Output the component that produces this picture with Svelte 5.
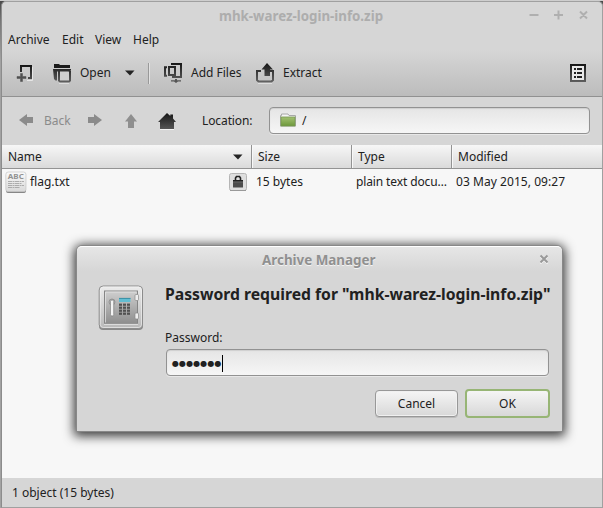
<script>
  const menus = [
    { label: 'Archive', w: 54 },
    { label: 'Edit', w: 33 },
    { label: 'View', w: 38 },
    { label: 'Help', w: 40 }
  ];
  const headers = ['Name', 'Size', 'Type', 'Modified'];
  const keys = [0, 1, 2, 3].flatMap((r) => [0, 1, 2].map((c) => ({ x: 21 + c * 4, y: 18.6 + r * 3 })));
</script>

<div class="screen">
  <div class="window">
    <div class="titlebar">
      <span class="title">mhk-warez-login-info.zip</span>
      <svg class="controls" width="62" height="12" viewBox="0 0 62 12">
        <path d="M0.5 6H9.5M25 6H34M29.5 1.5V10.5M51 2.5L58 9.5M58 2.5L51 9.5" stroke="#afafaf" stroke-width="2" />
      </svg>
    </div>

    <div class="menubar">
      {#each menus as m}
        <span style="width:{m.w}px">{m.label}</span>
      {/each}
    </div>

    <div class="toolbar">
      <svg class="i-new" width="18" height="20" viewBox="0 0 18 20">
        <defs>
          <linearGradient id="dark" x1="0" y1="0" x2="0" y2="20" gradientUnits="userSpaceOnUse">
            <stop offset="0" stop-color="#151515" /><stop offset="1" stop-color="#666" />
          </linearGradient>
        </defs>
        <path d="M10 15.5H15.5V2" fill="none" stroke="#e6e6e6" stroke-width="1" />
        <path d="M4 7V1H14V13H11" fill="none" stroke="url(#dark)" stroke-width="2" />
        <path d="M0 11.5H3.5V8.5H5.5V11.5H9V13.5H5.5V16.5H3.5V13.5H0Z" fill="#505050" stroke="#505050" stroke-width=".5" />
      </svg>
      <svg class="i-open" width="20" height="21" viewBox="0 0 20 21">
        <path d="M1 0H6L7 1H17V4H1Z" fill="#1b1b1b" />
        <path d="M0 5H18V6.5H5.5L4 8V16.5H2.5L1 15Z" fill="url(#dark)" />
        <path d="M6 19.2H16" stroke="#e8e8e8" stroke-width="1" />
        <path d="M6 6.5H16L17 7.5V16.5L16 17.5H7L6 16.5Z" fill="#d0d0d0" stroke="url(#dark)" stroke-width="2" />
      </svg>
      <span class="open">Open</span>
      <svg class="i-arrow" width="10" height="6" viewBox="0 0 10 6"><path d="M0 0.5H9.5L5 5.5Z" fill="#242424" /></svg>
      <i class="divider"></i>
      <svg class="i-add" width="20" height="22" viewBox="0 0 20 22">
        <path d="M7 1H17V14H8M3 4.2H1V12.8H3" fill="none" stroke="url(#dark)" stroke-width="2" />
        <rect x="5" y="4" width="6" height="8" fill="none" stroke="url(#dark)" stroke-width="2" />
        <path d="M11 16H13V17.2H17V18.5H14L12 20L10 18.5H7V17.2H11Z" fill="#555" />
      </svg>
      <span class="add">Add Files</span>
      <svg class="i-ext" width="20" height="21" viewBox="0 0 20 21">
        <path d="M2 20.2H16" stroke="#e9e9e9" stroke-width="1" />
        <path d="M5 8H1V17L2.5 18.5H15.5L17 17V8H13" fill="none" stroke="url(#dark)" stroke-width="2" />
        <path d="M11 0L17 6.5H14V13H8.5V6.5H5.5Z" fill="url(#dark)" />
      </svg>
      <span class="extract">Extract</span>
      <svg class="i-list" width="17" height="19" viewBox="0 0 17 19">
        <rect x="1" y="1" width="14" height="16" fill="#e8e8e8" stroke="url(#dark)" stroke-width="2" />
        <path d="M4 5H6M4 9H6M4 13H6M7 5H12M7 9H12M7 13H12" stroke="#222" stroke-width="2" />
      </svg>
    </div>

    <div class="location">
      <svg class="n-back" width="15" height="13" viewBox="0 0 15 13"><path d="M0 6L8 0V3H14V9H8V12Z" fill="#8b8b8b" /></svg>
      <span class="back">Back</span>
      <svg class="n-fwd" width="15" height="13" viewBox="0 0 15 13"><path d="M14 6L6 0V3H0V9H6V12Z" fill="#8b8b8b" /></svg>
      <svg class="n-up" width="13" height="15" viewBox="0 0 13 15"><path d="M6 0L12 7.5H9V14H3V7.5H0Z" fill="#8f8f8f" /></svg>
      <svg class="n-home" width="19" height="18" viewBox="0 0 19 18">
        <path d="M2 16.5H16" stroke="#f4f4f4" stroke-width="1" />
        <path d="M9 0L12.3 3V1.5H15V5.5L18 9H16V16H2V9H0Z" fill="url(#dark)" />
      </svg>
      <span class="loc">Location:</span>
      <div class="entry path">
        <svg width="17" height="15" viewBox="0 0 17 15">
          <defs>
            <linearGradient id="green" x1="0" y1="0" x2="0" y2="1">
              <stop offset="0" stop-color="#a3c172" /><stop offset="1" stop-color="#6d983b" />
            </linearGradient>
          </defs>
          <path d="M.5 13V2.5H1.5V1H8L9 2.5H15.5V13Z" fill="#f4f4f4" stroke="#a8a8a8" />
          <rect x="1" y="4" width="14" height="9" fill="url(#green)" stroke="#779850" stroke-width=".8" />
        </svg>
        <span>/</span>
      </div>
    </div>

    <div class="headers">
      {#each headers as h, i}
        <div class="th">
          <span>{h}</span>
          {#if i === 0}
            <svg width="10" height="6" viewBox="0 0 10 6"><path d="M0 0.5H9.5L5 5.5Z" fill="#242424" /></svg>
          {/if}
        </div>
      {/each}
    </div>

    <div class="list">
      <div class="row">
        <div class="name">
          <svg width="23" height="24" viewBox="0 0 23 24">
            <defs>
              <linearGradient id="paper" x1="0" y1="0" x2="0" y2="1">
                <stop offset="0" stop-color="#fafafa" /><stop offset="1" stop-color="#d8d8d8" />
              </linearGradient>
            </defs>
            <rect x="1" y="2" width="20" height="20" rx="2.5" fill="#777" />
            <rect x=".8" y="1" width="20.2" height="19.8" rx="2.5" fill="url(#paper)" stroke="#c4c4c4" stroke-width=".7" />
            <text x="2.8" y="8" class="abc" textLength="16" lengthAdjust="spacingAndGlyphs">ABC</text>
            <path d="M3 10.5H19M3 12.5H17M3 14.5H19M3 16.5H15" stroke="#a5a5a5" stroke-width=".9" stroke-dasharray="4 .5 2 .5" />
          </svg>
          <span>flag.txt</span>
          <svg class="lock" width="19" height="19" viewBox="0 0 19 19">
            <rect x=".5" y=".5" width="17" height="17" rx="2" fill="#dedede" stroke="#b5b5b5" />
            <path d="M1 17.5H17" stroke="#999" />
            <path d="M6.5 8V5L7.5 3.5H10.5L11.5 5V8" fill="none" stroke="#222" stroke-width="1.6" />
            <rect x="4" y="7" width="10" height="7.5" rx=".5" fill="#4c4c4c" />
            <path d="M4 7.5H14" stroke="#222" />
            <path d="M4 9.5H14" stroke="#666" stroke-width=".5" />
          </svg>
        </div>
        <div>15 bytes</div>
        <div class="kind">plain text docu…</div>
        <div class="date">03 May 2015, 09:27</div>
      </div>
    </div>

    <div class="status">1 object (15 bytes)</div>
  </div>

  <div class="dialog">
    <div class="dtitle">
      <span>Archive Manager</span>
      <svg width="10" height="10" viewBox="0 0 10 10">
        <path d="M1.5 2.5L8.5 9.5M8.5 2.5L1.5 9.5" stroke="#fff" stroke-width="1.6" />
        <path d="M1.5 1.5L8.5 8.5M8.5 1.5L1.5 8.5" stroke="#999" stroke-width="2" />
      </svg>
    </div>
    <div class="dbody">
      <svg class="safe" width="46" height="46" viewBox="0 0 46 46">
        <defs>
          <linearGradient id="metal" x1="0" y1="0" x2="0" y2="1">
            <stop offset="0" stop-color="#ececec" /><stop offset="1" stop-color="#b8b8b8" />
          </linearGradient>
          <linearGradient id="door" x1="0" y1="0" x2="0" y2="1">
            <stop offset="0" stop-color="#cfcfcf" /><stop offset="1" stop-color="#8e8e8e" />
          </linearGradient>
        </defs>
        <rect x="1" y="2" width="44" height="43" rx="4" fill="#6f6f6f" opacity=".75" />
        <rect x="1.2" y="1" width="43.3" height="42.6" rx="4" fill="url(#metal)" stroke="#8c8c8c" />
        <rect x="2.3" y="2" width="41.2" height="40.5" rx="3" fill="none" stroke="#f5f5f5" stroke-width=".6" />
        <rect x="6.5" y="6" width="33" height="32.5" fill="url(#door)" stroke="#858585" />
        <path d="M7.5 37.5V7H38.5" fill="none" stroke="#e8e8e8" stroke-width=".7" />
        <path d="M6 39.3H40" stroke="#eee" stroke-width=".8" />
        <rect x="37" y="9.5" width="3.5" height="6" rx="1" fill="#eee" stroke="#888" stroke-width=".7" />
        <rect x="37" y="28" width="3.5" height="6" rx="1" fill="#eee" stroke="#888" stroke-width=".7" />
        <circle cx="14" cy="17" r="3" fill="#b4b4b4" stroke="#858585" stroke-width=".7" />
        <rect x="12.5" y="15" width="3.2" height="16" rx="1.5" fill="#f4f4f4" stroke="#777" stroke-width=".6" />
        <rect x="21" y="13" width="11.5" height="4" fill="#62bdd2" />
        <path d="M21 13.4H32.5" stroke="#2f8197" stroke-width=".8" />
        {#each keys as k}
          <rect x={k.x} y={k.y} width="3" height="2.2" fill="#505050" />
        {/each}
      </svg>
      <div class="form">
        <h1>Password required for "mhk-warez-login-info.zip"</h1>
        <label for="pw">Password:</label>
        <div class="entry pw" id="pw"><span>●●●●●●●</span><i></i></div>
        <div class="buttons">
          <button class="cancel">Cancel</button>
          <button class="ok">OK</button>
        </div>
      </div>
    </div>
  </div>
</div>

<style>
  :global(body) { margin: 0; overflow: hidden; }
  * { box-sizing: border-box; }
  .screen {
    position: relative; width: 603px; height: 508px; overflow: hidden;
    background: linear-gradient(#4a4a4a, #777 20px, #a2a2a2 60px);
    font: 12px/16px "Noto Sans", "Open Sans", sans-serif; color: #212121;
    border-top: 1px solid #cecece; white-space: nowrap;
  }
  svg { display: block; flex: none; overflow: visible; }
  .window {
    display: flex; flex-direction: column; width: 602px; height: 507px; margin-left: 1px;
    background: #d6d6d6; border: 1px solid #a0a0a0; border-left-color: #8c8c8c;
    border-radius: 5px 5px 0 0;
  }
  .titlebar { display: flex; height: 27px; align-items: flex-start; padding: 6px 0 0 217px; }
  .title { width: 163px; font-weight: 700; font-size: 13.3px; color: #adadad; line-height: 17px; }
  .controls { margin: 1px 0 0 147px; }
  .menubar { display: flex; height: 21px; padding: 3px 0 0 6px; }
  .toolbar {
    display: flex; align-items: flex-start; height: 47px; padding: 13px 15px 0 15px;
    background: linear-gradient(#d6d6d6, #bcbcbc); border-bottom: 1px solid #919191;
  }
  .toolbar span { margin-top: 2px; }
  .i-new { margin: 2px 18px 0 0; }
  .i-open { margin-right: 7px; margin-top: 1px; }
  .open { width: 45px; }
  .i-arrow { margin-top: 7px; }
  .divider { width: 2px; height: 21px; margin: 0 14px 0 13px; background: #999; border-right: 1px solid #e2e2e2; }
  .i-add { margin-right: 7px; }
  .add { width: 65px; }
  .i-ext { margin-right: 7px; margin-top: 0; }
  .extract { flex: 1; }
  .i-list { margin: 1px 0 0 0; }
  .location { display: flex; height: 48px; align-items: flex-start; padding-left: 17px; }
  .n-back { margin: 17px 10px 0 0; }
  .back { width: 44px; margin-top: 16px; color: #8b8b8b; }
  .n-fwd { margin: 17px 22px 0 0; }
  .n-up { margin: 17px 20px 0 0; }
  .n-home { margin: 16px 25px 0 0; }
  .loc { width: 67px; margin-top: 16px; letter-spacing: -.1px; }
  .entry {
    display: flex; border: 1px solid #929292; border-radius: 4px;
    background: linear-gradient(#e5e5e5, #f6f6f6);
    box-shadow: 0 1px 0 #e8e8e8, inset 0 1px 1px #cfcfcf;
  }
  .path { width: 321px; height: 27px; margin-top: 10px; padding: 5px 0 0 10px; gap: 5px; }
  .headers {
    display: grid; grid-template-columns: 250px 100px 100px 1fr; height: 24px;
    background: linear-gradient(#f7f7f7, #dadada); border-bottom: 1px solid #939393;
  }
  .th { display: flex; justify-content: space-between; padding: 4px 8px 0 6px; border-right: 1px solid #939393; }
  .th + .th { border-left: 1px solid #f8f8f8; padding-left: 5px; }
  .th:last-child { border-right: 0; }
  .th svg { margin-top: 5px; }
  .list { height: 309px; background: #f7f7f7; }
  .row { display: grid; grid-template-columns: 254px 100px 100px 1fr; padding-top: 5px; }
  .name { display: flex; align-items: flex-start; height: 20px; }
  .name > svg:first-child { margin: -3px 2px 0 3px; }
  .name span { width: 199px; }
  .abc { font: 700 6.5px "Noto Sans", sans-serif; fill: #929292; }
  .kind { letter-spacing: -.12px; }
  .date { letter-spacing: .05px; }
  .lock { margin-top: -1px; }
  .status { flex: 1; padding: 7px 0 0 10px; }
  .dialog {
    position: absolute; left: 76px; top: 244px; width: 487px; height: 187px;
    background: #d6d6d6; border: 1px solid #888; border-radius: 6px 6px 0 0;
    box-shadow: 0 2px 11px 2px rgba(0, 0, 0, .78);
  }
  .dtitle {
    display: flex; height: 25px; padding: 5px 0 0 185px; border-radius: 5px 5px 0 0;
    background: linear-gradient(#e6e6e6, #d6d6d6); border-top: 1px solid #fff;
    font-size: 13.4px; font-weight: 700; line-height: 17px; color: #909090; text-shadow: 0 1px #f3f3f3;
  }
  .dtitle span { width: 277px; }
  .dtitle svg { margin-top: 2px; }
  .dbody { display: flex; padding-left: 21px; }
  .safe { margin-top: 14px; }
  .form { margin-left: 21px; width: 386px; }
  h1 { margin: 11px 0 0; font-size: 15.72px; line-height: 24px; }
  label { display: block; margin-top: 24px; }
  .pw { width: 383px; height: 27px; margin: 3px 0 0 1px; padding: 5px 0 0 5px; }
  .pw span { font: 8px/17px "DejaVu Sans", sans-serif; letter-spacing: .1px; }
  .pw i { width: 1px; height: 17px; background: #000; }
  .buttons { display: flex; justify-content: flex-end; align-items: center; gap: 7px; height: 30px; margin: 12px 1px 0 0; }
  button {
    font: inherit; color: inherit; height: 27px; padding: 1px 0 0; border: 1px solid #989898; border-radius: 4px;
    background: linear-gradient(#f5f5f5, #d8d8d8); box-shadow: inset 0 0 0 1px #f0f0f0, 0 1px #bbb;
  }
  .cancel { width: 83px; }
  .ok { width: 85px; height: 29px; border: 2px solid #97b575; box-shadow: none; }
</style>
